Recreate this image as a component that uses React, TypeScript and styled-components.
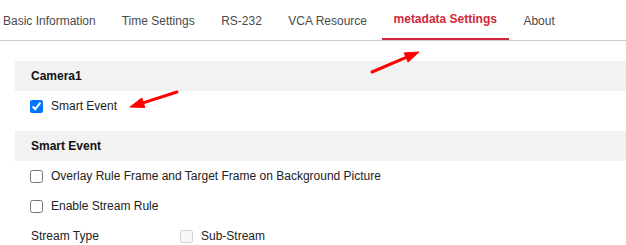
import * as React from 'react'
import styled, { createGlobalStyle } from 'styled-components'

const GlobalStyle = createGlobalStyle`
    body {
        margin: 0;
        background: #ffffff;
        font-family: "Liberation Sans", Arial, sans-serif;
        font-size: 12px;
        color: #222222;
    }
`

const Page = styled.div`
    position: relative;
    width: 626px;
    height: 245px;
    overflow: hidden;
`

const TabBar = styled.div`
    display: flex;
    height: 40px;
    border-bottom: 1px solid #cccccc;
    gap: 2.5px;
`

const Tab = styled.div<{ active?: boolean }>`
    display: flex;
    align-items: center;
    padding: 0 12px;
    box-sizing: border-box;
    height: 40px;
    color: ${(p) => (p.active ? '#d0283a' : '#4a4a4a')};
    font-weight: ${(p) => (p.active ? 'bold' : 'normal')};
    border-bottom: 2px solid ${(p) => (p.active ? '#d0283a' : 'transparent')};
    padding-top: ${(p) => (p.active ? '0' : '3px')};
    padding-bottom: ${(p) => (p.active ? '1px' : '0')};
    margin-bottom: ${(p) => (p.active ? '1px' : '0')};

    &:first-child {
        padding-left: 3px;
        padding-right: 11.5px;
    }
`

const Content = styled.div`
    padding: 20px 0 0 15px;
`

const SectionHeader = styled.div`
    display: flex;
    align-items: center;
    height: 30px;
    padding-left: 16px;
    background: #f2f2f2;
    font-weight: bold;
    color: #111111;
`

const Section = styled.div`
    margin-bottom: 10px;
`

const Row = styled.label`
    display: flex;
    align-items: center;
    height: 30px;
    padding-left: 15px;
    color: #222222;
`

const Check = styled.input.attrs({ type: 'checkbox' })`
    width: 13px;
    height: 13px;
    margin: 0 8px 0 0;
`

const FieldLabel = styled.span`
    width: 149px;
    padding-left: 1px;
`

const Overlay = styled.svg`
    position: absolute;
    left: 0;
    top: 0;
    pointer-events: none;
`

const Arrow: React.FC<{ x1: number; y1: number; x2: number; y2: number }> = ({ x1, y1, x2, y2 }) => {
    const len = Math.hypot(x2 - x1, y2 - y1)
    const dx = (x2 - x1) / len
    const dy = (y2 - y1) / len
    const bx = x2 - dx * 14
    const by = y2 - dy * 14
    const px = -dy * 5
    const py = dx * 5
    return (
        <g fill="#ff0000" stroke="#ff0000">
            <line x1={x1} y1={y1} x2={bx + dx * 2} y2={by + dy * 2} strokeWidth={3} strokeLinecap="round" />
            <polygon points={`${x2},${y2} ${bx + px},${by + py} ${bx - px},${by - py}`} strokeWidth={1} strokeLinejoin="round" />
        </g>
    )
}

const tabs = ['Basic Information', 'Time Settings', 'RS-232', 'VCA Resource', 'metadata Settings', 'About']

export default function App() {
    return (
        <Page>
            <GlobalStyle />
            <TabBar>
                {tabs.map((t) => (
                    <Tab key={t} active={t === 'metadata Settings'}>{t}</Tab>
                ))}
            </TabBar>
            <Content>
                <Section>
                    <SectionHeader>Camera1</SectionHeader>
                    <Row>
                        <Check defaultChecked />
                        Smart Event
                    </Row>
                </Section>
                <Section>
                    <SectionHeader>Smart Event</SectionHeader>
                    <Row>
                        <Check />
                        Overlay Rule Frame and Target Frame on Background Picture
                    </Row>
                    <Row>
                        <Check />
                        Enable Stream Rule
                    </Row>
                    <Row as="div">
                        <FieldLabel>Stream Type</FieldLabel>
                        <Check disabled />
                        Sub-Stream
                    </Row>
                </Section>
            </Content>
            <Overlay width={626} height={245}>
                <Arrow x1={372} y1={72} x2={419} y2={52} />
                <Arrow x1={177} y1={92} x2={130} y2={107} />
            </Overlay>
        </Page>
    )
}
